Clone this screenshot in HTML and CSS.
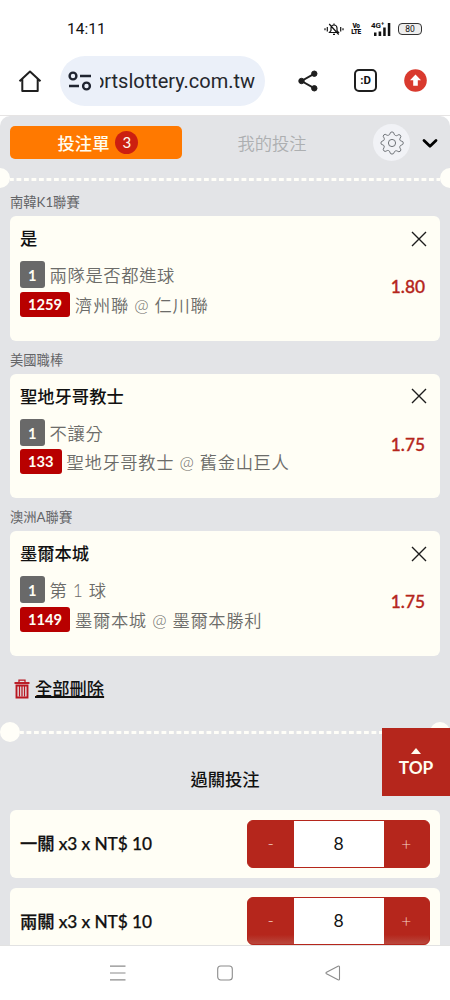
FILE: index.html
```html
<!DOCTYPE html>
<html lang="zh-Hant">
<head>
<meta charset="utf-8">
<title>投注單</title>
<link rel="stylesheet" href="styles.css">
</head>
<body>
<div class="phone">
  <header class="status">
    <span class="clock">14:11</span>
    <div class="status-icons">
      <svg width="20" height="14" viewBox="0 0 20 14" fill="none" stroke="#111" stroke-width="1.2"><path d="M5.5 10.5h9L13 8.5V6a3 3 0 0 0-6 0v2.500zM10 3V1.500M9 12.300h2M5.200 2l9.500 10.500M3.300 5v4.500M16.700 5v4.500M1 6.300v2M19 6.300v2"/></svg>
      <span class="volte"><b>Vo</b><b>LTE</b></span>
      <span class="network">4G⁺</span>
      <svg class="signal" width="17" height="13" viewBox="0 0 17 13" fill="#111"><path d="M0 9.500h2.500V13H0zM4.600 8.500h2.600V13H4.600zM9.200 4.500h2.500V13H9.200zM13.800 0h2.500v13h-2.500z"/></svg>
      <span class="battery">80</span>
    </div>
  </header>

  <div class="toolbar">
    <svg class="home" width="24" height="24" viewBox="0 0 24 24" fill="none" stroke="#1f1f1f" stroke-width="2" stroke-linejoin="round"><path d="M1.500 12.300 12 2.500l10.500 9.800M4.300 10v12h15.400V10"/></svg>
    <div class="address">
      <svg width="24" height="20" viewBox="0 0 24 20" fill="none" stroke="#1f2430" stroke-width="2.400"><circle cx="5" cy="5" r="3.400"/><path d="M12 5h11M1 15h10"/><circle cx="18.500" cy="15" r="3.400"/></svg>
      <span class="url"><span class="url-text">ortslottery.com.tw</span></span>
    </div>
    <svg class="share" width="20" height="22" viewBox="0 0 20 22" fill="#1f1f1f" stroke="#1f1f1f"><path d="M16.500 3.700 3.500 11l13 7.300" fill="none" stroke-width="1.900"/><circle cx="16.300" cy="3.700" r="2.700"/><circle cx="3.500" cy="11" r="2.700"/><circle cx="16.300" cy="18.300" r="2.700"/></svg>
    <span class="tabs">:D</span>
    <svg class="update" width="23" height="23" viewBox="0 0 23 23"><circle cx="11.500" cy="11.500" r="11.300" fill="#d93a2e"/><path d="M11.500 5.500 17 11.200h-3.200v5.600H9.200v-5.600H6z" fill="#fff"/></svg>
  </div>

  <main class="sheet-wrap">
    <div class="sheet">
      <div class="sheet-tabs">
        <div class="tab-active">投注單<span class="count">3</span></div>
        <div class="tab-idle">我的投注</div>
        <span class="gear"><svg width="24" height="24" viewBox="0 0 24 24" fill="none" stroke="#6f7378" stroke-width="1"><circle cx="12" cy="12" r="3.600"/><path d="M9.800 3.200Q10 .9 12 .9t2.200 2.300q.3 1 1.300 1.300 1 .4 1.800-.1 1.700-1.500 3-.2t-.2 3q-.6.800-.2 1.800.4 1 1.300 1 2.100.2 2.100 2t-2.100 2.200q-1 .2-1.300 1.200-.4 1 .2 1.800 1.500 1.800.2 3t-3-.1q-.8-.6-1.800-.2t-1.200 1.200Q14 23.100 12 23.100t-2.200-2.200q-.2-.9-1.200-1.300t-1.800.2q-1.800 1.300-3 0t.1-3q.6-.8.200-1.800-.300-.9-1.200-1.100Q.9 13.800.9 12t2.100-2.200q.9-.2 1.200-1.100.4-1-.2-1.800-1.500-1.700-.2-3t3 .2q.8.500 1.800.1.900-.3 1.200-1z" stroke-linejoin="round"/></svg></span>
        <svg class="chevron" width="16" height="11" viewBox="0 0 16 11" fill="none" stroke="#000" stroke-width="2.800" stroke-linecap="round" stroke-linejoin="round"><path d="M2 2.500 8 8.200l6-5.700"/></svg>
      </div>

      <div class="divider edge"><i></i><svg width="430" height="3"><path d="M-1 1.500H430" stroke="#fffef8" stroke-width="3" stroke-dasharray="4.800 2.700"/></svg><i></i></div>

      <div class="league">南韓K1聯賽</div>
      <section class="card">
        <div class="title-row"><span class="pick">是</span><svg class="close" width="16" height="16" viewBox="0 0 16 16"><path d="m1 1 14 14M15 1 1 15" stroke="#1c1c1c" stroke-width="1.400"/></svg></div>
        <div class="bet">
          <div class="lines">
            <div class="line"><span class="badge grey">1</span><span>兩隊是否都進球</span></div>
            <div class="line"><span class="badge red">1259</span><span>濟州聯 @ 仁川聯</span></div>
          </div>
          <span class="odds">1.80</span>
        </div>
      </section>

      <div class="league">美國職棒</div>
      <section class="card">
        <div class="title-row"><span class="pick">聖地牙哥教士</span><svg class="close" width="16" height="16" viewBox="0 0 16 16"><path d="m1 1 14 14M15 1 1 15" stroke="#1c1c1c" stroke-width="1.400"/></svg></div>
        <div class="bet">
          <div class="lines">
            <div class="line"><span class="badge grey">1</span><span>不讓分</span></div>
            <div class="line"><span class="badge red">133</span><span>聖地牙哥教士 @ 舊金山巨人</span></div>
          </div>
          <span class="odds">1.75</span>
        </div>
      </section>

      <div class="league">澳洲A聯賽</div>
      <section class="card">
        <div class="title-row"><span class="pick">墨爾本城</span><svg class="close" width="16" height="16" viewBox="0 0 16 16"><path d="m1 1 14 14M15 1 1 15" stroke="#1c1c1c" stroke-width="1.400"/></svg></div>
        <div class="bet">
          <div class="lines">
            <div class="line"><span class="badge grey">1</span><span>第 1 球</span></div>
            <div class="line"><span class="badge red">1149</span><span>墨爾本城 @ 墨爾本勝利</span></div>
          </div>
          <span class="odds">1.75</span>
        </div>
      </section>

      <div class="clear-all">
        <svg width="16" height="20" viewBox="0 0 16 20" fill="none" stroke="#b91620"><path d="M.5 4h15" stroke-width="1.900"/><path d="M5 3.500V1.200h6v2.300" stroke-width="1.300"/><path d="M2.500 6.500v12h11v-12z" stroke-width="1.900"/><path d="M5.500 7v10.500M8 7v10.500M10.500 7v10.500" stroke-width="1.300"/></svg>
        <span class="clear-text">全部刪除</span>
      </div>

      <div class="divider inner"><i></i><svg width="410" height="3"><path d="M-1 1.500H410" stroke="#fffef8" stroke-width="3" stroke-dasharray="4.800 2.700"/></svg><i></i></div>

      <h2 class="heading">過關投注</h2>

      <div class="stake-card">
        <span class="stake">一關 x3 x NT$ 10</span>
        <div class="stepper"><span class="step">-</span><span class="value">8</span><span class="step">+</span></div>
      </div>
      <div class="stake-card">
        <span class="stake">兩關 x3 x NT$ 10</span>
        <div class="stepper faded"><span class="step">-</span><span class="value">8</span><span class="step">+</span></div>
      </div>
    </div>
    <div class="top-button"><span class="arrow"></span><span>TOP</span></div>
  </main>

  <nav class="system-nav">
    <svg width="16" height="16" viewBox="0 0 16 16" stroke="#8c8c8c" stroke-width="1.200"><path d="M0 1.200h15.500M0 8h15.500M0 14.800h15.500"/></svg>
    <svg width="16" height="16" viewBox="0 0 16 16" fill="none" stroke="#8c8c8c" stroke-width="1.100"><rect x=".7" y="1" width="14.600" height="14" rx="3"/></svg>
    <svg width="16" height="16" viewBox="0 0 16 16" fill="none" stroke="#8c8c8c" stroke-width="1.100" stroke-linejoin="round"><path d="M1.500 7.200 13 1.200q1.500-.5 1.500 1v11.600q0 1.500-1.500 1L1.500 8.800q-1-.8 0-1.600z"/></svg>
  </nav>
</div>
</body>
</html>
```

FILE: styles.css
```css
* { box-sizing: border-box; }
body { margin: 0; background: #fff; }
svg { display: block; flex: none; }

.phone {
  width: 450px;
  height: 1000px;
  display: flex;
  flex-direction: column;
  overflow: hidden;
  font-family: Lato, "Noto Sans CJK TC", sans-serif;
  color: #111;
}

/* Status bar */
.status {
  height: 50px;
  padding: 8px 28px 0 67px;
  display: flex;
  align-items: center;
  justify-content: space-between;
}
.clock { font: 400 15.500px/20px Roboto, sans-serif; }
.status-icons { display: flex; align-items: center; width: 98px; }
.volte {
  flex: none;
  display: flex;
  flex-direction: column;
  align-items: center;
  width: 10px;
  margin-left: 7px;
  font: 900 6.500px/6.500px Roboto, sans-serif;
  letter-spacing: -.4px;
}
.volte b { font-weight: 900; }
.network { margin: -6px 0 0 10px; width: 14px; font: 700 8px/8px Roboto, sans-serif; white-space: nowrap; }
.signal { margin-left: -11px; }
.battery {
  flex: none;
  width: 24px;
  height: 12px;
  margin-left: 7px;
  border: 1.500px solid #333;
  border-radius: 4px;
  background: #eee;
  font: 400 8.500px/10px Roboto, sans-serif;
  text-align: center;
}

/* Browser toolbar */
.toolbar {
  height: 66px;
  padding: 6px 23px 10px 18px;
  display: flex;
  align-items: center;
  border-bottom: 1px solid #e6e4e4;
}
.address {
  width: 205px;
  height: 50px;
  margin-left: 18px;
  padding: 0 10px 0 8px;
  border-radius: 25px;
  background: #ebf0f9;
  display: flex;
  align-items: center;
  gap: 8px;
}
.url {
  width: 155px;
  overflow: hidden;
  display: flex;
  justify-content: flex-end;
  font: 400 20px/28px Roboto, sans-serif;
  letter-spacing: -.02px;
  color: #25272d;
}
.url-text { flex: none; margin-top: 1px; }
.share { margin-left: 33px; }
.tabs {
  width: 23px;
  height: 23px;
  margin-left: 36px;
  border: 2px solid #1f1f1f;
  border-radius: 5px;
  font: 700 11.500px/18px Roboto, sans-serif;
  text-align: center;
}
.update { margin-left: 27px; }

/* Betting sheet */
.sheet-wrap { position: relative; height: 829px; overflow: hidden; }
.sheet {
  height: 829px;
  overflow: hidden;
  border-radius: 10px 10px 0 0;
  background: #e3e4e7;
}
.sheet-tabs { height: 53px; padding: 0 11px 0 10px; display: flex; align-items: center; }
.tab-active {
  width: 172px;
  height: 33px;
  padding-left: 4px;
  border-radius: 5px;
  background: #ff7900;
  color: #fffdf0;
  display: flex;
  align-items: center;
  justify-content: center;
  gap: 6px;
  font-size: 17.300px;
  font-weight: 500;
}
.count {
  width: 23px;
  height: 23px;
  border-radius: 50%;
  background: #cc1f10;
  font: 400 15px/23px Lato, sans-serif;
  text-align: center;
}
.tab-idle { width: 180px; text-align: center; font-size: 17.300px; font-weight: 350; color: #adafb1; }
.gear {
  width: 37px;
  height: 37px;
  margin-left: 11px;
  border-radius: 50%;
  background: #f1f2f6;
  display: grid;
  place-items: center;
}
.chevron { margin-left: 12px; margin-top: 2px; }

.divider { display: flex; align-items: center; }
.divider i { flex: none; width: 20px; height: 20px; border-radius: 50%; background: #fffef8; }
.divider svg { margin-top: 2px; }
.edge { height: 20px; margin: -1px -10px 0; }
.inner { height: 20px; }

.league { height: 33px; padding: 9px 10px 0; font-size: 13.300px; line-height: 20px; color: #646568; }
.divider + .league { height: 28px; padding-top: 4px; }
.card {
  height: 124.500px;
  margin: 0 10px;
  padding: 12px 13px 0 10px;
  border-radius: 6px;
  background: #fffef5;
}
.title-row { display: flex; justify-content: space-between; align-items: center; height: 22px; }
.pick { font-size: 17.300px; font-weight: 500; line-height: 22px; }
.close { margin-top: -1px; }
.bet { display: flex; justify-content: space-between; margin-top: 11px; }
.lines { display: flex; flex-direction: column; gap: 2.500px; }
.line {
  display: flex;
  align-items: center;
  gap: 5px;
  height: 27px;
  font-size: 17.300px;
  font-weight: 350;
  letter-spacing: .65px;
  color: #6c6c69;
  white-space: nowrap;
}
.badge {
  padding: 0 8px;
  border-radius: 3px;
  color: #fffef5;
  font-size: 14.700px;
  font-weight: 700;
  letter-spacing: 0;
  line-height: 25px;
}
.grey { height: 27px; line-height: 28px; background: #696969; }
.red { height: 25px; background: #b80000; }
.odds {
  margin: 16px 2px 0 0;
  font-size: 17.300px;
  font-weight: 500;
  line-height: 20px;
  color: #b5261c;
  -webkit-text-stroke: .35px #b5261c;
}

.clear-all { height: 66px; padding: 0 14px; display: flex; align-items: center; gap: 5px; }
.clear-text {
  font-size: 17.300px;
  font-weight: 500;
  line-height: 22px;
  text-decoration: underline;
  text-decoration-thickness: 1.500px;
}
.heading { margin: 26px 0 19px; font-size: 17.300px; font-weight: 500; line-height: 23px; text-align: center; }

.stake-card {
  height: 68px;
  margin: 0 10px 10px;
  padding: 0 10px;
  border-radius: 6px;
  background: #fffef5;
  display: flex;
  align-items: center;
  justify-content: space-between;
}
.stake {
  margin-top: -3px;
  font-size: 17.300px;
  font-weight: 500;
  letter-spacing: -.08px;
  -webkit-text-stroke: .25px #111;
}
.stepper {
  width: 183px;
  height: 48px;
  border: 1px solid #b5261c;
  border-radius: 6px;
  overflow: hidden;
  display: flex;
  background: #b5261c;
}
.step { flex: 1; text-align: center; font-size: 17.300px; font-weight: 300; line-height: 46px; color: #f5d5c8; }
.value { width: 90px; background: #fff; text-align: center; font-size: 17.600px; line-height: 46px; }
.faded .step { background: linear-gradient(#b5261c 80%, #b9483e); }
.faded { margin-top: -1px; }

.top-button {
  position: absolute;
  right: 0;
  top: 612px;
  width: 68px;
  height: 68px;
  padding-top: 20px;
  background: #b5261c;
  color: #fffdf0;
  display: flex;
  flex-direction: column;
  align-items: center;
  gap: 3px;
  font-size: 17.300px;
  font-weight: 700;
  line-height: 22px;
}
.arrow { border: 5px solid transparent; border-top: 0; border-bottom: 6px solid #fffdf0; }

.system-nav {
  height: 55px;
  padding-bottom: 1px;
  border-top: 1px solid #e2e2e2;
  background: #fff;
  display: flex;
  align-items: center;
  justify-content: center;
  gap: 91.500px;
}
```
